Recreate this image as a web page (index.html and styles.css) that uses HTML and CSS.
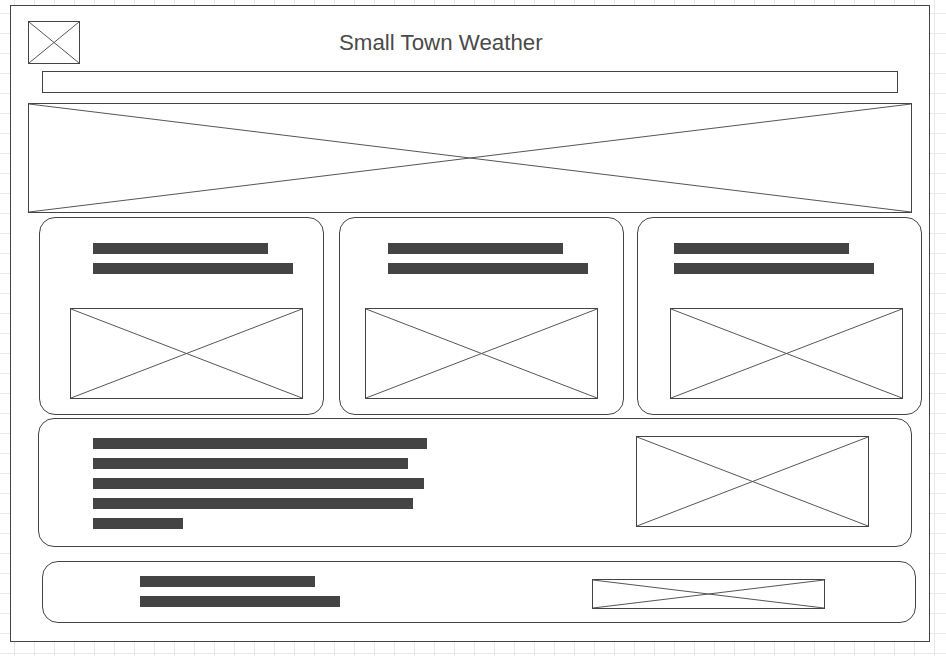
FILE: index.html
```html
<!DOCTYPE html>
<html lang="en">
<head>
<meta charset="utf-8">
<title>Small Town Weather</title>
<link rel="stylesheet" href="styles.css">
</head>
<body>
<div class="frame">
  <header class="header">
    <div class="ph logo"><svg viewBox="0 0 100 100" preserveAspectRatio="none"><line x1="0" y1="0" x2="100" y2="100"/><line x1="100" y1="0" x2="0" y2="100"/></svg></div>
    <h1 class="title">Small Town Weather</h1>
  </header>
  <div class="search"></div>
  <div class="ph banner"><svg viewBox="0 0 100 100" preserveAspectRatio="none"><line x1="0" y1="0" x2="100" y2="100"/><line x1="100" y1="0" x2="0" y2="100"/></svg></div>

  <section class="cards">
    <div class="card card-a">
      <div class="bars"><div class="bar w175"></div><div class="bar w200"></div></div>
      <div class="ph media"><svg viewBox="0 0 100 100" preserveAspectRatio="none"><line x1="0" y1="0" x2="100" y2="100"/><line x1="100" y1="0" x2="0" y2="100"/></svg></div>
    </div>
    <div class="card card-b">
      <div class="bars"><div class="bar w175"></div><div class="bar w200"></div></div>
      <div class="ph media"><svg viewBox="0 0 100 100" preserveAspectRatio="none"><line x1="0" y1="0" x2="100" y2="100"/><line x1="100" y1="0" x2="0" y2="100"/></svg></div>
    </div>
    <div class="card card-c">
      <div class="bars"><div class="bar w175"></div><div class="bar w200"></div></div>
      <div class="ph media"><svg viewBox="0 0 100 100" preserveAspectRatio="none"><line x1="0" y1="0" x2="100" y2="100"/><line x1="100" y1="0" x2="0" y2="100"/></svg></div>
    </div>
  </section>

  <section class="panel">
    <div class="bars panel-bars">
      <div class="bar w334"></div>
      <div class="bar w315"></div>
      <div class="bar w331"></div>
      <div class="bar w320"></div>
      <div class="bar w90"></div>
    </div>
    <div class="ph media panel-media"><svg viewBox="0 0 100 100" preserveAspectRatio="none"><line x1="0" y1="0" x2="100" y2="100"/><line x1="100" y1="0" x2="0" y2="100"/></svg></div>
  </section>

  <footer class="footer">
    <div class="bars footer-bars"><div class="bar w175"></div><div class="bar w200"></div></div>
    <div class="ph footer-media"><svg viewBox="0 0 100 100" preserveAspectRatio="none"><line x1="0" y1="0" x2="100" y2="100"/><line x1="100" y1="0" x2="0" y2="100"/></svg></div>
  </footer>
</div>
</body>
</html>
```

FILE: styles.css
```css
* { box-sizing: border-box; }

html, body {
  margin: 0;
  padding: 0;
}

body {
  width: 946px;
  height: 656px;
  overflow: hidden;
  background-color: #ffffff;
  background-image:
    linear-gradient(to right, #e8e8e8 1px, transparent 1px),
    linear-gradient(to bottom, #e8e8e8 1px, transparent 1px);
  background-size: 20px 20px;
  background-position: 14px 13px;
  font-family: "Liberation Sans", Arial, sans-serif;
  padding-top: 5px;
  padding-left: 10px;
}

.frame {
  width: 920px;
  height: 637px;
  border: 1px solid #444;
  background: #fff;
}

.ph {
  border: 1px solid #444;
  background: #fff;
}
.ph svg {
  display: block;
  width: 100%;
  height: 100%;
  overflow: visible;
}
.ph line {
  stroke: #555;
  stroke-width: 1;
  vector-effect: non-scaling-stroke;
}

.header {
  display: flex;
  align-items: center;
  margin: 15px 0 0 17px;
}
.logo {
  width: 52px;
  height: 43px;
  flex: none;
}
.title {
  margin: 0 0 0 259px;
  font-size: 22.3px;
  font-weight: normal;
  line-height: 24px;
  color: #4a4a4a;
}

.search {
  margin: 7px 0 0 31px;
  width: 856px;
  height: 22px;
  border: 1px solid #444;
}

.banner {
  margin: 10px 0 0 17px;
  width: 884px;
  height: 110px;
}

.cards {
  display: flex;
  margin: 4px 0 0 28px;
}
.card {
  width: 285px;
  height: 198px;
  border: 1px solid #444;
  border-radius: 16px;
  padding-top: 25px;
}
.card-b { margin-left: 15px; }
.card-c { margin-left: 13px; }

.bars {
  display: flex;
  flex-direction: column;
  gap: 9px;
}
.bar {
  height: 11px;
  background: #444;
}
.w175 { width: 175px; }
.w200 { width: 200px; }
.w334 { width: 334px; }
.w315 { width: 315px; }
.w331 { width: 331px; }
.w320 { width: 320px; }
.w90 { width: 90px; }

.media {
  width: 233px;
  height: 91px;
  margin-top: 34px;
}
.card-a .bars { margin-left: 53px; }
.card-a .media { margin-left: 30px; }
.card-b .bars { margin-left: 48px; }
.card-b .media { margin-left: 25px; }
.card-c .bars { margin-left: 36px; }
.card-c .media { margin-left: 32px; }

.panel {
  display: flex;
  align-items: flex-start;
  margin: 3px 0 0 27px;
  width: 874px;
  height: 129px;
  border: 1px solid #444;
  border-radius: 16px;
}
.panel-bars {
  margin: 19px 0 0 54px;
  width: 334px;
}
.panel-media {
  margin: 17px 0 0 209px;
  flex: none;
}

.footer {
  display: flex;
  align-items: flex-start;
  margin: 14px 0 0 31px;
  width: 874px;
  height: 62px;
  border: 1px solid #444;
  border-radius: 16px;
}
.footer-bars {
  margin: 14px 0 0 97px;
  width: 200px;
}
.footer-media {
  width: 233px;
  height: 30px;
  margin: 17px 0 0 252px;
  flex: none;
}
```
